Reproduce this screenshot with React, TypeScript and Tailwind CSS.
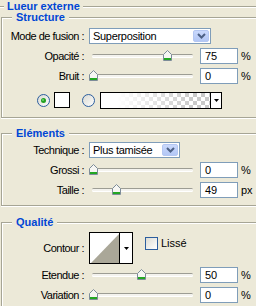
import React from "react";

const LINE = "h-px bg-[#A6A595] shadow-[0_1px_0_#fff]";

function Thumb() {
  return (
    <svg width="9" height="11" viewBox="0 0 9 11" className="block">
      <path d="M0.5 4.5 L4.5 0.5 L8.5 4.5 L8.5 10.5 L0.5 10.5 Z" fill="#F6F6F3" stroke="#7D8C99" />
      <rect x="1" y="8" width="7" height="2" fill="#22A722" />
    </svg>
  );
}

function Slider({ left }: { left: number }) {
  return (
    <div className="relative w-[108px] h-[16px] ml-[5px]">
      <div className="absolute left-[3px] right-[4px] top-[6px] h-[3px] rounded-full bg-[#F4F3EE] border-t border-[#9D9D94] shadow-[0_1px_0_#fff]" />
      <div className="absolute top-[2px]" style={{ left }}>
        <Thumb />
      </div>
    </div>
  );
}

function NumBox({ v }: { v: string }) {
  return (
    <div className="w-[38px] h-[16px] ml-[3px] border border-[#7F9DB9] bg-white pl-[4px] leading-[14px]">
      {v}
    </div>
  );
}

function Label({ children }: { children: React.ReactNode }) {
  return <div className="w-[82px] text-right tracking-[-0.5px] leading-[14px] whitespace-nowrap">{children}</div>;
}

function SliderRow({ label, left, v, unit }: { label: string; left: number; v: string; unit: string }) {
  return (
    <div className="flex items-center h-[16px]">
      <Label>{label}</Label>
      <Slider left={left} />
      <NumBox v={v} />
      <span className="ml-[3px] leading-[14px]">{unit}</span>
    </div>
  );
}

function Chevron() {
  return (
    <svg width="9" height="6" viewBox="0 0 9 6">
      <path d="M1 1 L4.5 4.5 L8 1" stroke="#4D6185" strokeWidth="2" fill="none" />
    </svg>
  );
}

function Select({ text, className }: { text: string; className: string }) {
  return (
    <div className={`flex items-center h-[16px] ml-[5px] border border-[#7F9DB9] bg-white pl-[3px] ${className}`}>
      <span className="leading-[14px] tracking-[-0.3px] whitespace-nowrap">{text}</span>
      <div className="ml-auto mr-px w-[16px] h-[12px] rounded-[2px] border border-[#B4C7F2] bg-[linear-gradient(#CAD9FC,#B3C7F5)] flex items-center justify-center">
        <Chevron />
      </div>
    </div>
  );
}

function Group({ title, className, children }: { title: string; className: string; children: React.ReactNode }) {
  return (
    <div className={`relative ml-px border-l border-t border-b border-[#A6A595] shadow-[inset_1px_1px_0_#fff,0_1px_0_#fff] ${className}`}>
      <div className="absolute -top-[8px] left-[10px] px-[4px] bg-[#ECE9D8] font-bold text-[#0046D5] leading-[14px] whitespace-nowrap">
        {title}
      </div>
      {children}
    </div>
  );
}

function Radio({ on, id }: { on: boolean; id: string }) {
  return (
    <svg width="13" height="13" viewBox="0 0 13 13" className="block">
      <defs>
        <linearGradient id={id} x1="0" y1="0" x2="1" y2="1">
          <stop offset="0" stopColor="#D8D8D0" />
          <stop offset="1" stopColor="#FFFFFF" />
        </linearGradient>
      </defs>
      <circle cx="6.5" cy="6.5" r="6" fill={`url(#${id})`} stroke="#2C5E9E" />
      {on && (
        <>
          <circle cx="6.5" cy="6.5" r="2.5" fill="#21A121" />
          <circle cx="6" cy="6" r="1" fill="#6FD46F" />
        </>
      )}
    </svg>
  );
}

export default function App() {
  return (
    <div className="w-[256px] h-[306px] overflow-hidden bg-[#ECE9D8] text-[11px] text-black font-['Liberation_Sans',Arial,sans-serif]">
      <div className="flex items-center h-[13px]">
        <div className={`w-[4px] ${LINE}`} />
        <span className="px-[3px] font-bold text-[#0046D5] leading-[13px] whitespace-nowrap">Lueur externe</span>
        <div className={`flex-1 ${LINE}`} />
      </div>

      <Group title="Structure" className="mt-[4px] pt-[10px] pb-[9px]">
        <div className="flex flex-col gap-[4px]">
          <div className="flex items-center h-[16px]">
            <Label>Mode de fusion :</Label>
            <Select text="Superposition" className="w-[122px]" />
          </div>
          <SliderRow label="Opacité :" left={74} v="75" unit="%" />
          <SliderRow label="Bruit :" left={0} v="0" unit="%" />
        </div>
        <div className="flex items-center h-[16px] mt-[8px] pl-[35px]">
          <Radio on id="r1" />
          <div className="ml-[4px] w-[16px] h-[16px] border border-black bg-white" />
          <div className="ml-[12px]">
            <Radio on={false} id="r2" />
          </div>
          <div className="ml-[5px] w-[122px] h-[17px] border border-black flex">
            <div className="flex-1 bg-[image:repeating-conic-gradient(#c9c9c9_0%_25%,#ffffff_0%_50%)] bg-[length:8px_8px]">
              <div className="w-full h-full bg-[linear-gradient(to_right,#fff_15%,rgba(255,255,255,0)_85%)]" />
            </div>
            <div className="w-[11px] border-l border-black bg-white flex items-center justify-center">
              <svg width="5" height="3" viewBox="0 0 5 3">
                <path d="M0 0 H5 L2.5 3 Z" fill="#000" />
              </svg>
            </div>
          </div>
        </div>
      </Group>

      <Group title="Eléments" className="mt-[15px] pt-[8px] pb-[7px]">
        <div className="flex flex-col gap-[4px]">
          <div className="flex items-center h-[16px]">
            <Label>Technique :</Label>
            <Select text="Plus tamisée" className="w-[91px]" />
          </div>
          <SliderRow label="Grossi :" left={0} v="0" unit="%" />
          <SliderRow label="Taille :" left={23} v="49" unit="px" />
        </div>
      </Group>

      <Group title="Qualité" className="mt-[16px] pt-[9px] pb-[6px]">
        <div className="flex items-center h-[32px]">
          <Label>Contour :</Label>
          <div className="ml-[5px] w-[44px] h-[32px] border border-black flex bg-white">
            <svg width="29" height="30" viewBox="0 0 29 30" className="block">
              <path d="M1 30 L29 1 L29 30 Z" fill="#AAA798" />
            </svg>
            <div className="w-[13px] border-l border-black flex items-center justify-center">
              <svg width="5" height="3" viewBox="0 0 5 3">
                <path d="M0 0 H5 L2.5 3 Z" fill="#000" />
              </svg>
            </div>
          </div>
          <div className="self-start mt-[5px] ml-[12px] w-[13px] h-[13px] border border-[#2C5E9E] bg-[linear-gradient(135deg,#DCDCD4,#FFFFFF)]" />
          <span className="self-start mt-[4px] ml-[3px] leading-[14px]">Lissé</span>
        </div>
        <div className="flex flex-col gap-[4px] mt-[3px]">
          <SliderRow label="Etendue :" left={48} v="50" unit="%" />
          <SliderRow label="Variation :" left={0} v="0" unit="%" />
        </div>
      </Group>
    </div>
  );
}
